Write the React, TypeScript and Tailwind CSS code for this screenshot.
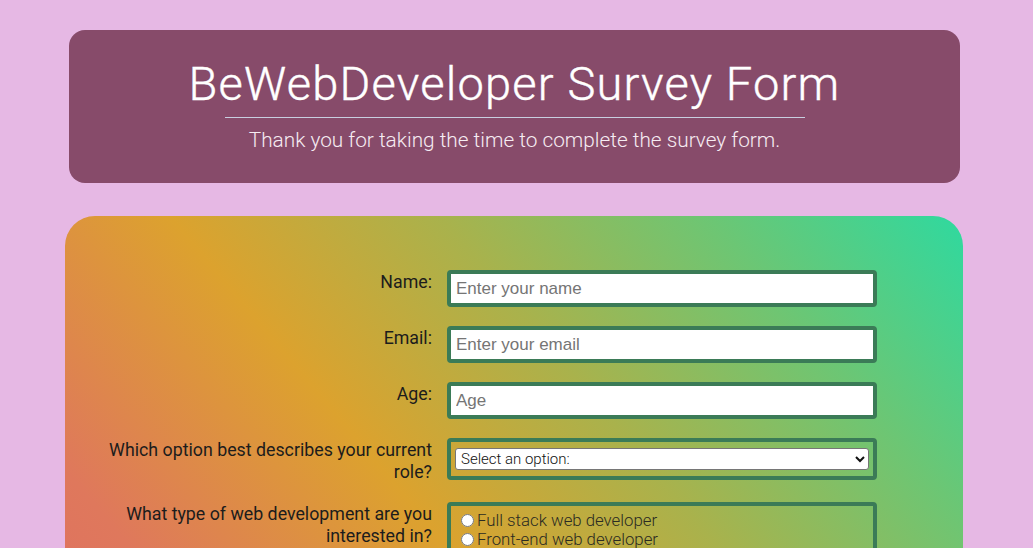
import React from 'react'

const labelCls =
  "w-[340px] shrink-0 pt-[1px] text-right text-[17.8px] leading-[22px] text-[#1c1c1c] [font-family:Roboto,'Liberation_Sans',sans-serif]"

const inputCls =
  "h-[37px] w-[430px] rounded-[4px] border-4 border-[#3b7b57] bg-white px-[5px] text-[17px] text-[#222] placeholder:text-[#757575] outline-none [font-family:'Liberation_Sans',Arial,sans-serif]"

const boxCls = 'w-[430px] rounded-[4px] border-4 border-[#3b7b57]'

const Row = ({ label, children }: { label: string; children: React.ReactNode }): React.ReactNode => (
  <div className="flex items-start gap-[15px]">
    <label className={labelCls}>{label}</label>
    {children}
  </div>
)

const roles = ['Full stack web developer', 'Front-end web developer', 'Back-end web developer', 'Not sure yet']
const langs = ['HTML', 'CSS', 'JavaScript', 'Python', 'PHP', 'Other']

const App = (): React.ReactNode => {
  return (
    <div className="min-h-screen bg-[#e6b8e4] pt-[30px] pb-10 [font-family:Roboto,'Liberation_Sans',sans-serif]">
      <header className="ml-[69px] flex w-[891px] flex-col items-center rounded-[16px] bg-[#874b6a] pt-[26px] pb-[31px]">
        <h1 className="text-[47px] leading-[56px] font-light tracking-[1.2px] text-white [-webkit-text-stroke:0.4px_white]">
          BeWebDeveloper Survey Form
        </h1>
        <hr className="mt-[5px] w-[580px] border-t-[1.5px] border-[#c8cfe0]" />
        <p className="mt-[10px] text-[20.8px] leading-[24px] font-light text-[#f6ecf2]">
          Thank you for taking the time to complete the survey form.
        </p>
      </header>

      <form className="mt-[33px] ml-[65px] flex min-h-[820px] w-[898px] flex-col gap-[19px] rounded-[30px] bg-[linear-gradient(50deg,#e0606a_0%,#df785c_30%,#dca22e_50%,#a9b24c_67%,#6cc674_84%,#2fd99f_100%)] pt-[54px] pb-[50px] pl-[27px]">
        <Row label="Name:">
          <input className={inputCls} placeholder="Enter your name" type="text" />
        </Row>
        <Row label="Email:">
          <input className={inputCls} placeholder="Enter your email" type="email" />
        </Row>
        <Row label="Age:">
          <input className={inputCls} placeholder="Age" type="number" />
        </Row>
        <Row label="Which option best describes your current role?">
          <div className={`${boxCls} px-[4px] py-[5px]`}>
            <select
              className="h-[22px] w-full rounded-[3px] border border-[#767676] bg-white pl-[1px] text-[15px] font-light text-[#111]"
              defaultValue=""
            >
              <option value="">Select an option:</option>
              <option>Student</option>
              <option>Full time job</option>
              <option>Full time learner</option>
              <option>Prefer not to say</option>
              <option>Other</option>
            </select>
          </div>
        </Row>
        <Row label="What type of web development are you interested in?">
          <div className={`${boxCls} flex flex-col px-[6px] pt-[5px] pb-[8px]`}>
            {roles.map(r => (
              <label key={r} className="flex items-center text-[16.8px] leading-[19px] font-light text-[#2b2b22]">
                <input className="mr-[3px] ml-[4px] h-[13px] w-[13px]" name="dev" type="radio" />
                {r}
              </label>
            ))}
          </div>
        </Row>
        <Row label="Which languages would you like to learn?">
          <div className={`${boxCls} flex flex-col px-[6px] pt-[5px] pb-[8px]`}>
            {langs.map(l => (
              <label key={l} className="flex items-center text-[16.8px] leading-[19px] font-light text-[#2b2b22]">
                <input className="mr-[3px] ml-[4px] h-[13px] w-[13px]" type="checkbox" />
                {l}
              </label>
            ))}
          </div>
        </Row>
        <Row label="Any comments or suggestions?">
          <textarea
            className="h-[110px] w-[430px] rounded-[4px] border-4 border-[#3b7b57] bg-white px-[5px] py-[4px] text-[17px] placeholder:text-[#757575] [font-family:'Liberation_Sans',Arial,sans-serif]"
            placeholder="Enter your comment here..."
          />
        </Row>
        <div className="flex pl-[355px]">
          <button
            className="h-[42px] w-[430px] rounded-[4px] border-4 border-[#3b7b57] bg-[#874b6a] text-[18px] text-white"
            type="submit"
          >
            Submit
          </button>
        </div>
      </form>
    </div>
  )
}

export default App
